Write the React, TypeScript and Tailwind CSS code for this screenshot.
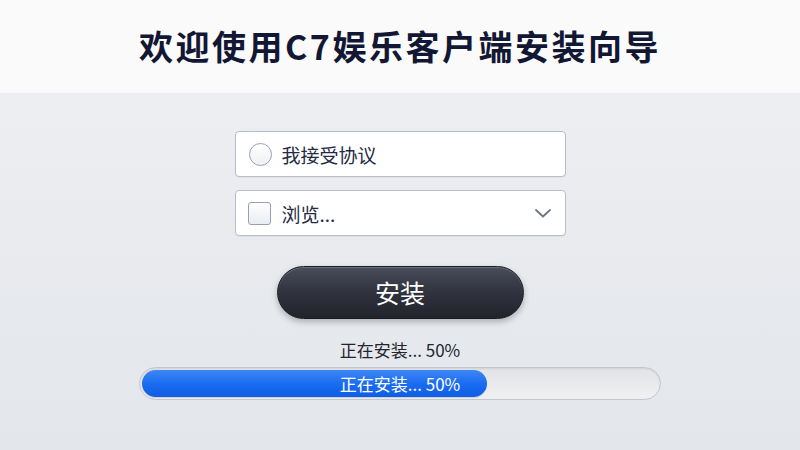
import React from "react";

export default function App() {
  const font = { fontFamily: '"Noto Sans CJK SC", "Noto Sans", sans-serif' };
  return (
    <div
      className="w-[800px] h-[450px] flex flex-col overflow-hidden bg-gradient-to-b from-[#eff0f2] to-[#e3e6eb]"
      style={font}
    >
      <div className="h-[94px] shrink-0 bg-[#fafafa] border-b border-[#ececee] flex items-center justify-center">
        <h1 className="text-[34px] font-bold text-[#121734] tracking-[2.5px] leading-none pb-[2px]">
          欢迎使用C7娱乐客户端安装向导
        </h1>
      </div>
      <div className="flex flex-col items-center pt-[37px]">
        <div className="w-[331px] h-[46px] bg-white border border-[#b8bccd] rounded-[4px] flex items-center pl-[13px] shadow-[0_1px_1px_rgba(0,0,0,0.04)]">
          <div className="w-[23px] h-[23px] rounded-full border-[1.5px] border-[#9a9eb3] bg-gradient-to-b from-white to-[#eef0f4]" />
          <span className="ml-[10px] text-[19px] text-[#252a44] leading-none">我接受协议</span>
        </div>
        <div className="mt-[13px] w-[331px] h-[46px] bg-white border border-[#b8bccd] rounded-[4px] flex items-center pl-[12px] pr-[13px] shadow-[0_1px_1px_rgba(0,0,0,0.04)]">
          <div className="w-[23px] h-[23px] rounded-[3px] border-[1.5px] border-[#9a9eb3] bg-gradient-to-b from-white to-[#e9ecf3]" />
          <span className="ml-[11px] text-[19px] text-[#252a44] leading-none">浏览...</span>
          <svg className="ml-auto" width="18" height="12" viewBox="0 0 18 12">
            <path d="M2 3 L9 9.5 L16 3" fill="none" stroke="#707488" strokeWidth="1.8" strokeLinecap="round" strokeLinejoin="round" />
          </svg>
        </div>
        <button className="mt-[30px] w-[247px] h-[53px] rounded-full bg-gradient-to-b from-[#4a4d5a] via-[#30333e] to-[#22242c] border border-[#1c1d24] shadow-[0_3px_6px_rgba(0,0,0,0.25),inset_0_1px_0_rgba(255,255,255,0.18)] flex items-center justify-center">
          <span className="text-white text-[25px] leading-none">安装</span>
        </button>
        <div className="mt-[22px] text-[17px] text-[#23252e] leading-none">正在安装... 50%</div>
        <div className="mt-[9px] relative w-[522px] h-[33px] rounded-full bg-gradient-to-b from-[#e2e3e6] to-[#f1f1f3] border border-[#c4c6cc] shadow-[inset_0_1px_2px_rgba(0,0,0,0.08)] p-[2px]">
          <div className="h-full w-[345px] rounded-full bg-gradient-to-b from-[#3d86f5] via-[#1a6cf0] to-[#0f5ee6] shadow-[0_1px_1px_rgba(0,0,0,0.15)]" />
          <div className="absolute inset-0 flex items-center justify-center text-[17px] text-white leading-none">
            正在安装... 50%
          </div>
        </div>
      </div>
    </div>
  );
}
